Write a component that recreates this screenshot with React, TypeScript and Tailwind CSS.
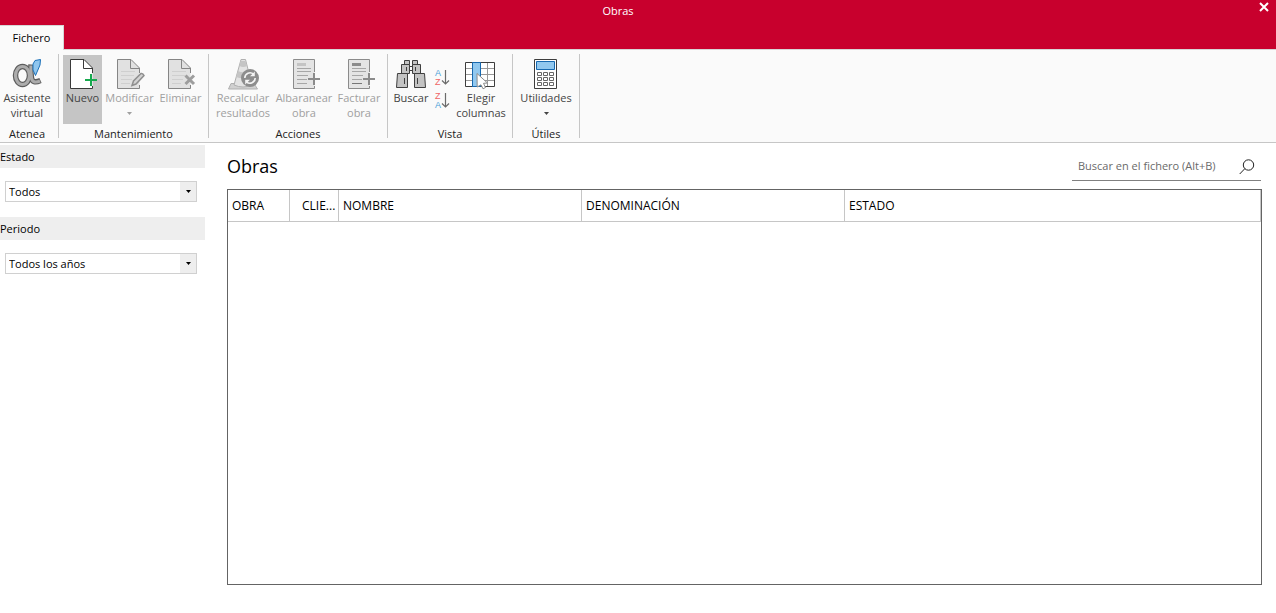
import type { ReactNode } from "react"
import { clsx } from "clsx"

const columns = [
  { label: "OBRA", className: "w-[62px] pl-1" },
  { label: "CLIE...", className: "w-[49px] pl-3" },
  { label: "NOMBRE", className: "w-[243px] pl-1" },
  { label: "DENOMINACIÓN", className: "w-[263px] pl-1" },
  { label: "ESTADO", className: "pl-1" },
]

function Icon({ children }: { children: ReactNode }) {
  return (
    <svg viewBox="0 0 32 32" className="h-8 w-8 shrink-0" fill="none" aria-hidden="true">
      {children}
    </svg>
  )
}

function AlphaIcon() {
  return (
    <Icon>
      <g stroke="#5c5c5c" strokeWidth="5.5">
        <ellipse cx="11.5" cy="17.5" rx="7" ry="9" />
        <path d="M20 6.5Q19.5 14 20.5 20T29.5 22.5" />
      </g>
      <g stroke="#acacac" strokeWidth="3.2">
        <ellipse cx="11.5" cy="17.5" rx="7" ry="9" />
        <path d="M20 7.5Q19.5 14 20.5 20T29 23" />
      </g>
      <path d="M24 2.5 29.5 1.5 29 7 24.5 17.5 22 12 22 6Z" fill="#8fc6ee" stroke="#1b70b8" />
    </Icon>
  )
}

function NewIcon() {
  return (
    <Icon>
      <path d="M3.5 1.5H17L25.5 10V30.5H3.5Z" fill="#fff" />
      <path d="M25.5 15V10L17 1.5H3.5V30.5H25.5V28M16.5 1.5V10.5H25.5" stroke="#3a3a3a" />
      <path d="M24 16V28M18 22H30" stroke="#17a94e" strokeWidth="2" />
    </Icon>
  )
}

function GrayPage() {
  return (
    <>
      <path d="M3.5 1.5H17L25.5 10V30.5H3.5Z" fill="#e1e1e1" />
      <path d="M25.5 15V10L17 1.5H3.5V30.5H25.5V27M16.5 1.5V10.5H25.5" stroke="#858585" />
      <path d="M7 13.5H21M7 17.5H20M7 21.5H18M7 25.5H16" stroke="#cfcfcf" />
    </>
  )
}

function EditIcon() {
  return (
    <Icon>
      <GrayPage />
      <path d="M18 27.5 19.5 23 27 15.5Q29 15 30 17.5L22 26Z" fill="#d2d2d2" stroke="#8f8f8f" strokeWidth="1.5" />
    </Icon>
  )
}

function DeleteIcon() {
  return (
    <Icon>
      <GrayPage />
      <path d="M20.5 17.5 29 26M29 17.5 20.5 26" stroke="#9d9d9d" strokeWidth="3" />
    </Icon>
  )
}

function RecalcIcon() {
  return (
    <Icon>
      <path d="M4 25.5H27L30.5 31H1.5Z" fill="#d0d0d0" stroke="#b0b0b0" />
      <path d="M14 1.5H18.5L25 27Q16 31 7 27Z" fill="#e3e3e3" stroke="#b0b0b0" />
      <path d="M13.5 3 18.5 3 20 8Q16 10 12.5 8ZM11 13Q16 15.5 21.5 13L23 19Q16 21.5 9 19Z" fill="#c5c5c5" />
      <circle cx="23" cy="20" r="9" fill="#8d8d8d" />
      <path d="M17.8 20A5.2 5.2 0 0 1 26.5 16.2M28.2 20A5.2 5.2 0 0 1 19.5 23.8" stroke="#f4f4f4" strokeWidth="1.6" />
      <path d="M27.8 13.5V18.3H23ZM18.2 26.5V21.7H23Z" fill="#f4f4f4" />
    </Icon>
  )
}

function InvoiceIcon({ dark }: { dark?: boolean }) {
  return (
    <Icon>
      <path d="M5.5 1.5H26.5V30.5H5.5Z" fill="#e4e4e4" />
      <path d="M26.5 14V1.5H5.5V30.5H26.5V28" stroke="#8b8b8b" />
      <path d="M9 5H18V8H9Z" fill={dark ? "#8b8b8b" : "#c4c4c4"} />
      <path d="M9 10.5H23M9 13.5H23M9 17.5H20M9 21.5H19M9 25.5H19" stroke="#a6a6a6" />
      {dark && <path d="M9 25.5H19" stroke="#777" />}
      <path d="M26 15V27M20 21H32" stroke="#8b8b8b" strokeWidth="2" />
    </Icon>
  )
}

function BinocularsIcon() {
  return (
    <Icon>
      <g fill="#c3c3c3" stroke="#3f3f3f">
        <path d="M9.5 2.5H14.5V6.5H9.5ZM17.5 2.5H22.5V6.5H17.5Z" />
        <path d="M14.5 8.5H17.5V12.5H14.5Z" fill="#fff" />
        <path d="M6.5 6.5H14.5V15.5H6.5ZM17.5 6.5H25.5V15.5H17.5Z" />
        <path d="M2.5 15.5H12.5V29.5H1.5ZM19.5 15.5H29.5L30.5 29.5H19.5Z" />
        <path d="M11.5 9V13M20.5 9V13M9.5 20V26M22.5 20V26" />
      </g>
    </Icon>
  )
}

function ColumnsIcon() {
  return (
    <Icon>
      <path d="M.5 4.5H29.5V28.5H.5Z" fill="#fff" />
      <path d="M1 10.5H29M1 16.5H29M1 22.5H29M22.5 5V28" stroke="#999" />
      <path d="M.5 4.5H29.5V28.5H.5Z" stroke="#3d3d3d" />
      <path d="M7.5 4.5H15.5V28.5H7.5Z" fill="#91c8ef" stroke="#1769b0" />
      <path
        d="M12 15.5 22.5 25 18.5 25.3 20.5 29.5 18 30.8 16 26.8 12.2 29Z"
        fill="#fff"
        stroke="#8b8b8b"
      />
    </Icon>
  )
}

function CalculatorIcon() {
  return (
    <Icon>
      <path d="M4.5 1.5H26.5V30.5H4.5Z" fill="#fff" stroke="#3d3d3d" />
      <path d="M6.5 3.5H24.5V11.5H6.5Z" fill="#91c8ef" stroke="#1769b0" />
      <path
        d="M7.5 14.5H11.5V17.5H7.5ZM13.5 14.5H17.5V17.5H13.5ZM19.5 14.5H23.5V17.5H19.5ZM7.5 19.5H11.5V22.5H7.5ZM13.5 19.5H17.5V22.5H13.5ZM19.5 19.5H23.5V22.5H19.5ZM7.5 24.5H11.5V27.5H7.5ZM13.5 24.5H17.5V27.5H13.5ZM19.5 24.5H23.5V27.5H19.5Z"
        stroke="#666"
      />
    </Icon>
  )
}

function SortIcon({ top, bottom }: { top: string; bottom: string }) {
  return (
    <svg viewBox="0 0 16 19" className="h-[19px] w-4" fill="none" aria-hidden="true">
      <g fontFamily="Liberation Sans, sans-serif" fontSize="9">
        <text x="1" y="8" fill={top === "A" ? "#4a9fd8" : "#ef6464"}>
          {top}
        </text>
        <text x="1" y="17" fill={bottom === "A" ? "#4a9fd8" : "#ef6464"}>
          {bottom}
        </text>
      </g>
      <path d="M11.5 2V16M8 12.5 11.5 16 15 12.5" stroke="#6b6b6b" strokeWidth="1.2" />
    </svg>
  )
}

function Caret({ className }: { className?: string }) {
  return (
    <svg viewBox="0 0 5 3" className={clsx("h-[3px] w-[5px]", className)} aria-hidden="true">
      <path d="M0 0H5L2.5 3Z" fill="currentColor" />
    </svg>
  )
}

type RibbonButtonProps = {
  icon: ReactNode
  lines: string[]
  className: string
  menu?: boolean
  active?: boolean
  disabled?: boolean
}

function RibbonButton({ icon, lines, className, menu, active, disabled }: RibbonButtonProps) {
  return (
    <button
      type="button"
      disabled={disabled}
      className={clsx(
        "flex h-[69px] flex-col items-center pt-[3px] leading-[15px] whitespace-nowrap",
        active && "bg-[#c5c5c5]",
        disabled ? "text-[#a0a0a0]" : "text-[#444]",
        className,
      )}
    >
      {icon}
      {lines.map((line) => (
        <span key={line}>{line}</span>
      ))}
      {menu && <Caret className="mt-[7px]" />}
    </button>
  )
}

function RibbonGroup({ label, className, children }: { label: string; className?: string; children: ReactNode }) {
  return (
    <section className={clsx("flex flex-col border-r border-[#c6c6c6] pr-1", className)}>
      <div className="flex pt-px">{children}</div>
      <h2 className="h-3.5 text-center leading-5 text-[#222]">{label}</h2>
    </section>
  )
}

function Filter({ id, label, option }: { id: string; label: string; option: string }) {
  return (
    <div className="flex flex-col gap-[13px]">
      <label htmlFor={id} className="bg-[#eee] leading-[23px]">
        {label}
      </label>
      <div className="relative mr-2 ml-[5px]">
        <select
          id={id}
          className="block h-[21px] w-full appearance-none border border-[#d0d0d0] bg-white pt-0.5 pl-[3px]"
        >
          <option>{option}</option>
        </select>
        <span className="pointer-events-none absolute inset-y-px right-px flex w-4 items-center justify-center bg-[#eee]">
          <Caret />
        </span>
      </div>
    </div>
  )
}

export default function App() {
  return (
    <div className="flex min-h-screen flex-col bg-white font-['Open_Sans',sans-serif] text-[11px] text-black">
      <header className="flex flex-col bg-[#c8002d]">
        <div className="flex h-[25px] items-start">
          <h1 className="flex-1 pt-[3px] text-center leading-4 text-white">Obras</h1>
          <div className="flex w-10 justify-end pt-0.5 pr-[7px]">
            <button type="button" aria-label="Cerrar" className="text-white">
              <svg viewBox="0 0 10 10" className="h-2.5 w-2.5" aria-hidden="true">
                <path d="M1 1 9 9M9 1 1 9" stroke="currentColor" strokeWidth="2" />
              </svg>
            </button>
          </div>
        </div>
        <nav className="flex">
          <a
            href="#fichero"
            className="h-[25px] w-16 border-t border-r border-[#d6d6d6] bg-[#fafafa] text-center leading-6"
          >
            Fichero
          </a>
          <div className="flex-1 border-b border-[#d6d6d6]" />
        </nav>
      </header>

      <div className="flex border-b border-[#c6c6c6] bg-[#fafafa] py-1">
        <RibbonGroup label="Atenea">
          <RibbonButton icon={<AlphaIcon />} lines={["Asistente", "virtual"]} className="w-[54px]" />
        </RibbonGroup>
        <RibbonGroup label="Mantenimiento" className="pl-1">
          <RibbonButton icon={<NewIcon />} lines={["Nuevo"]} className="w-[39px]" active />
          <RibbonButton icon={<EditIcon />} lines={["Modificar"]} className="w-[55px]" menu disabled />
          <RibbonButton icon={<DeleteIcon />} lines={["Eliminar"]} className="w-[47px]" disabled />
        </RibbonGroup>
        <RibbonGroup label="Acciones" className="pl-1">
          <RibbonButton icon={<RecalcIcon />} lines={["Recalcular", "resultados"]} className="w-[60px]" disabled />
          <RibbonButton icon={<InvoiceIcon />} lines={["Albaranear", "obra"]} className="w-[62px]" disabled />
          <RibbonButton icon={<InvoiceIcon dark />} lines={["Facturar", "obra"]} className="w-12" disabled />
        </RibbonGroup>
        <RibbonGroup label="Vista" className="pl-1">
          <RibbonButton icon={<BinocularsIcon />} lines={["Buscar"]} className="w-[38px]" />
          <div className="flex w-6 flex-col items-center gap-1 pt-[13px]">
            <button type="button" aria-label="Orden ascendente">
              <SortIcon top="A" bottom="Z" />
            </button>
            <button type="button" aria-label="Orden descendente">
              <SortIcon top="Z" bottom="A" />
            </button>
          </div>
          <RibbonButton icon={<ColumnsIcon />} lines={["Elegir", "columnas"]} className="w-[54px]" />
        </RibbonGroup>
        <RibbonGroup label="Útiles" className="pl-1">
          <RibbonButton icon={<CalculatorIcon />} lines={["Utilidades"]} className="w-[58px]" menu />
        </RibbonGroup>
      </div>

      <div className="flex flex-1">
        <aside className="flex w-[205px] flex-col gap-[15px] pt-0.5">
          <Filter id="estado" label="Estado" option="Todos" />
          <Filter id="periodo" label="Periodo" option="Todos los años" />
        </aside>

        <main className="flex flex-1 flex-col pt-2 pr-3.5 pb-7 pl-[22px]">
          <div className="mb-2 flex items-start justify-between">
            <h2 className="text-lg leading-[30px]">Obras</h2>
            <div className="mr-px flex h-[30px] w-[189px] items-center border-b border-[#808080] px-1.5 pt-0.5">
              <input
                type="search"
                aria-label="Buscar en el fichero"
                placeholder="Buscar en el fichero (Alt+B)"
                className="min-w-0 flex-1 outline-none placeholder:text-[#6a6a6a]"
              />
              <button type="button" aria-label="Buscar">
                <svg viewBox="0 0 16 16" className="h-4 w-4" fill="none" stroke="#222" aria-hidden="true">
                  <circle cx="9.5" cy="6" r="5.2" />
                  <path d="M5.8 9.7 0.7 15" />
                </svg>
              </button>
            </div>
          </div>
          <div className="flex-1 border border-[#646464]">
            <table className="w-full table-fixed border-separate border-spacing-0 text-xs">
              <thead>
                <tr>
                  {columns.map((column) => (
                    <th
                      key={column.label}
                      scope="col"
                      className={clsx(
                        "h-8 border-r border-b border-[#c6c6c6] text-left font-normal whitespace-nowrap",
                        column.className,
                      )}
                    >
                      {column.label}
                    </th>
                  ))}
                </tr>
              </thead>
            </table>
          </div>
        </main>
      </div>
    </div>
  )
}
